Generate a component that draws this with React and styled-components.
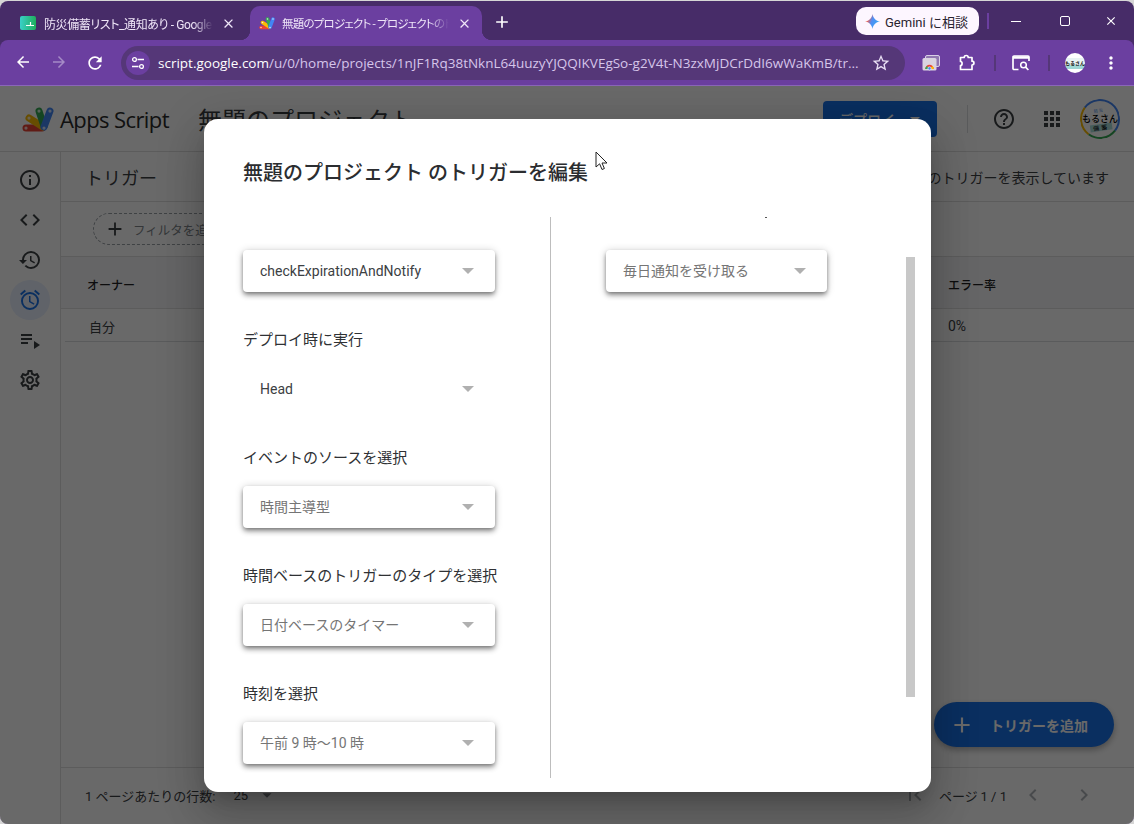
import React from 'react';
import styled, { createGlobalStyle } from 'styled-components';
import {
  MdInfoOutline, MdCode, MdHistory, MdOutlineAlarm, MdPlaylistPlay, MdOutlineSettings,
  MdArrowBack, MdArrowForward, MdRefresh, MdStarBorder, MdClose, MdAdd, MdMoreVert,
  MdHelpOutline, MdApps, MdArrowDropDown, MdFirstPage, MdChevronLeft, MdChevronRight,
} from 'react-icons/md';

const UI_FONT = `Roboto, "Noto Sans CJK JP", sans-serif`;

const GlobalStyle = createGlobalStyle`
  html, body {
    margin: 0;
    height: 100%;
    background: #d6d6d6;
    overflow: hidden;
  }
  #root {
    height: 100%;
  }
  * {
    box-sizing: border-box;
  }
`;

const Page = styled.div`
  height: 824px;
  padding-top: 1px;
  font-family: ${UI_FONT};
`;

const BrowserWindow = styled.div`
  height: 823px;
  display: flex;
  flex-direction: column;
  border-radius: 8px;
  overflow: hidden;
  background: #472c68;
  position: relative;
`;

/* browser chrome */
const TabStrip = styled.div`
  height: 39px;
  flex: none;
  display: flex;
  padding: 5px 0 0 8px;
`;

const Tab = styled.div`
  width: ${p => (p.$active ? '232px' : '242px')};
  height: 34px;
  display: flex;
  align-items: center;
  gap: 8px;
  padding: ${p => (p.$active ? '0 10px 0 9px' : '0 14px 0 12px')};
  border-radius: 10px 10px 0 0;
  color: #efe6f8;
  font-size: 12px;
  background: ${p => (p.$active ? '#6b3fa0' : 'transparent')};
  position: relative;

  svg {
    flex: none;
  }

  ${p => p.$active && `
    &::before, &::after {
      content: '';
      position: absolute;
      bottom: 0;
      width: 10px;
      height: 10px;
    }
    &::before {
      left: -10px;
      background: radial-gradient(circle at 0 0, transparent 10px, #6b3fa0 10.5px);
    }
    &::after {
      right: -10px;
      background: radial-gradient(circle at 100% 0, transparent 10px, #6b3fa0 10.5px);
    }
  `}
`;

const TabTitle = styled.span`
  flex: 1;
  min-width: 0;
  margin-left: ${p => (p.$active ? '-1px' : '0')};
  font-size: ${p => (p.$active ? '11.5px' : '12px')};
  letter-spacing: ${p => (p.$active ? '-0.8px' : '-0.4px')};
  white-space: nowrap;
  font-feature-settings: "palt";
  -webkit-mask-image: linear-gradient(to right, #000 88%, transparent 100%);
  mask-image: linear-gradient(to right, #000 88%, transparent 100%);
`;

const NewTab = styled.div`
  width: 24px;
  height: 24px;
  margin: 4px 0 0 8px;
  display: flex;
  align-items: center;
  justify-content: center;
  color: #fff;
`;

const StripRight = styled.div`
  margin-left: auto;
  display: flex;
  align-items: center;
  height: 28px;
  margin-top: 1px;
`;

const GeminiPill = styled.div`
  width: 123px;
  height: 28px;
  border-radius: 10px;
  background: #fdf6ff;
  color: #2a2430;
  font-size: 13px;
  display: flex;
  align-items: center;
  gap: 5px;
  padding-left: 9px;
`;

const StripDivider = styled.div`
  width: 2px;
  height: 16px;
  margin: 0 20px 0 8px;
  background: #6b3fa0;
`;

const WindowButton = styled.div`
  width: 14px;
  margin-right: ${p => p.$gap || 0}px;
  display: flex;
  justify-content: center;
  color: #fff;
`;

const MinimizeLine = styled.div`
  width: 10px;
  height: 1px;
  background: #fff;
`;

const MaximizeBox = styled.div`
  width: 10px;
  height: 10px;
  border: 1px solid #fff;
  border-radius: 2px;
`;

const Toolbar = styled.div`
  height: 46px;
  flex: none;
  display: flex;
  align-items: center;
  background: #6b3fa0;
  border-bottom: 1px solid #8a66b8;
  border-radius: 8px 8px 0 0;
`;

const NavButton = styled.div`
  width: 36px;
  display: flex;
  justify-content: center;
  color: ${p => (p.$disabled ? '#a58bc6' : '#fff')};
`;

const NavGroup = styled.div`
  display: flex;
  flex: none;
  padding-left: 5px;
`;

const AddressBar = styled.div`
  width: 784px;
  height: 34px;
  flex: none;
  margin-left: 8px;
  display: flex;
  align-items: center;
  padding: 0 14px 0 5px;
  border-radius: 17px;
  background: #553778;
  color: #fff;
`;

const SiteChip = styled.div`
  width: 24px;
  height: 24px;
  flex: none;
  border-radius: 50%;
  background: #6b3fa0;
  display: flex;
  align-items: center;
  justify-content: center;
`;

const UrlText = styled.div`
  flex: 1;
  margin-left: 8px;
  font-family: "Open Sans", "Noto Sans", sans-serif;
  font-size: 13.5px;
  white-space: nowrap;
  color: #d6c5ea;
`;

const UrlHost = styled.span`
  color: #fff;
`;

const ToolIcons = styled.div`
  flex: 1;
  display: flex;
  align-items: center;
  padding-left: 8px;
  color: #fff;
`;

const ToolSlot = styled.div`
  width: 36px;
  display: flex;
  justify-content: center;
`;

const ToolDivider = styled.div`
  width: 2px;
  height: 16px;
  margin: 0 7px 0 9px;
  background: #553778;
`;

const ToolAvatar = styled.div`
  width: 20px;
  height: 20px;
  border-radius: 50%;
  background: linear-gradient(#fff 0 25%, #e8f3f3 25% 60%, #9fd8d6 60% 80%, #fff 80%);
  color: #111;
  font-size: 5px;
  font-weight: 700;
  line-height: 20px;
  text-align: center;
  white-space: nowrap;
`;

/* Apps Script page under the scrim */
const AppArea = styled.div`
  flex: 1;
  min-height: 0;
  display: flex;
  flex-direction: column;
  background: #fff;
  position: relative;
  color: #202124;
`;

const AppHeader = styled.header`
  height: 66px;
  flex: none;
  display: flex;
  align-items: center;
  padding: 0 14px 0 22px;
  border-bottom: 1px solid #e0e0e0;
`;

const ProductName = styled.div`
  margin-left: 6px;
  font-family: "Open Sans", Roboto, sans-serif;
  font-size: 22px;
  letter-spacing: -0.6px;
  color: #2b2b2b;
`;

const ProjectName = styled.div`
  margin-left: 29px;
  font-size: 24px;
  color: #3c4043;
`;

const HeaderRight = styled.div`
  margin-left: auto;
  display: flex;
  align-items: center;
`;

const DeployButton = styled.div`
  width: 114px;
  height: 36px;
  border-radius: 4px;
  background: #1a73e8;
  color: #fff;
  font-size: 14px;
  font-weight: 500;
  display: flex;
  align-items: center;
  padding-left: 16px;
`;

const DeployArrow = styled.span`
  margin-left: 8px;
  display: flex;
`;

const HeaderDivider = styled.div`
  width: 1px;
  height: 28px;
  margin: 0 24px 0 30px;
  background: #dadce0;
`;

const HeaderIcon = styled.div`
  width: 24px;
  margin-right: 24px;
  display: flex;
  justify-content: center;
  color: #3c4043;
`;

const AccountAvatar = styled.div`
  width: 40px;
  height: 40px;
  margin-left: -8px;
  border-radius: 50%;
  border: 2px solid #4285f4;
  border-left-color: #fbbc04;
  border-bottom-color: #34a853;
  background: #fff;
  color: #000;
  display: flex;
  flex-direction: column;
  align-items: center;
  justify-content: center;
  white-space: nowrap;
  transform: rotate(-8deg);
`;

const AvatarTop = styled.span`
  font-size: 4px;
  line-height: 6px;
  color: #1a73e8;
  letter-spacing: 1px;
`;

const AvatarName = styled.span`
  font-size: 9px;
  line-height: 10px;
  font-weight: 500;
  transform: rotate(8deg);
`;

const AvatarBand = styled.span`
  font-size: 6px;
  line-height: 7px;
  letter-spacing: 2px;
  padding: 0 3px;
  background: #a8dedb;
`;

const AppBody = styled.div`
  flex: 1;
  min-height: 0;
  display: flex;
`;

const SideNav = styled.nav`
  width: 61px;
  flex: none;
  display: flex;
  flex-direction: column;
  align-items: center;
  padding-top: 8px;
  border-right: 1px solid #e0e0e0;
`;

const SideItem = styled.div`
  width: 40px;
  height: 40px;
  border-radius: 50%;
  display: flex;
  align-items: center;
  justify-content: center;
  color: ${p => (p.$active ? '#1a73e8' : '#3c4043')};
  background: ${p => (p.$active ? '#e8f0fe' : 'transparent')};
`;

const Main = styled.main`
  flex: 1;
  min-width: 0;
  display: flex;
  flex-direction: column;
  position: relative;
`;

const TitleRow = styled.div`
  height: 50px;
  flex: none;
  display: flex;
  align-items: center;
  justify-content: space-between;
  padding: 0 25px 0 24px;
  border-bottom: 1px solid #e0e0e0;
`;

const PageTitle = styled.div`
  font-size: 18px;
  color: #3c4043;
`;

const TitleNote = styled.div`
  font-size: 14px;
  color: #3c4043;
`;

const FilterRow = styled.div`
  height: 55px;
  flex: none;
  display: flex;
  align-items: center;
  padding-left: 32px;
  border-bottom: 1px solid #e0e0e0;
`;

const FilterChip = styled.div`
  width: 190px;
  height: 32px;
  border: 1px dashed #9aa0a6;
  border-radius: 16px;
  display: flex;
  align-items: center;
  gap: 7px;
  padding-left: 10px;
  color: #80868b;
  font-size: 12.5px;
`;

const FilterPlus = styled.span`
  display: flex;
  color: #3c4043;
`;

const TableArea = styled.div`
  flex: 1;
  min-height: 0;
`;

const HeadRow = styled.div`
  height: 52px;
  display: flex;
  align-items: center;
  justify-content: space-between;
  padding: 3px 0 0 26px;
  background: #f5f6f7;
  border-bottom: 1px solid #e0e0e0;
  font-size: 12px;
  font-weight: 500;
  color: #202124;
`;

const ColumnEnd = styled.div`
  width: 186px;
`;

const RateCell = styled(ColumnEnd)`
  font-size: 14px;
`;

const DataRow = styled.div`
  height: 33px;
  display: flex;
  align-items: center;
  justify-content: space-between;
  margin-left: 4px;
  padding: 2px 0 0 24px;
  border-bottom: 1px solid #dadce0;
  font-size: 13px;
  color: #3c4043;
`;

const Footer = styled.div`
  height: 57px;
  flex: none;
  display: flex;
  align-items: center;
  padding: 0 38px 2px 24px;
  border-top: 1px solid #e0e0e0;
  font-size: 13px;
  color: #3c4043;
`;

const RowsValue = styled.span`
  margin-left: 18px;
  margin-right: 8px;
`;

const Pager = styled.div`
  margin-left: auto;
  display: flex;
  align-items: center;
  color: #b0b4b8;
`;

const PagerLabel = styled.span`
  margin: 0 14px 0 12px;
  color: #3c4043;
  font-feature-settings: "palt";
`;

const PagerGap = styled.span`
  width: 27px;
`;

const Fab = styled.div`
  position: absolute;
  right: 20px;
  bottom: 77px;
  width: 180px;
  height: 45px;
  border-radius: 23px;
  background: #1a73e8;
  color: #fff;
  font-size: 14px;
  font-weight: 700;
  display: flex;
  align-items: center;
  gap: 15px;
  padding-left: 15px;
  box-shadow: 0 3px 6px rgba(0, 0, 0, 0.3);
`;

/* modal */
const Scrim = styled.div`
  position: absolute;
  inset: 0;
  padding: 33px 0 0 204px;
  background: rgba(0, 0, 0, 0.59);
`;

const Dialog = styled.div`
  width: 727px;
  height: 673px;
  padding: 40px 16px 14px 39px;
  display: flex;
  flex-direction: column;
  background: #fff;
  border-radius: 14px;
  box-shadow: 0 11px 15px -7px rgba(0, 0, 0, 0.2), 0 24px 38px 3px rgba(0, 0, 0, 0.14), 0 9px 46px 8px rgba(0, 0, 0, 0.12);
`;

const DialogTitle = styled.h2`
  margin: 0 0 30px;
  height: 28px;
  font-size: 20px;
  line-height: 29px;
  font-weight: 500;
  color: #2b2d30;
`;

const DialogBody = styled.div`
  flex: 1;
  min-height: 0;
  display: flex;
`;

const LeftColumn = styled.div`
  width: 308px;
  flex: none;
  padding-top: 33px;
  display: flex;
  flex-direction: column;
  gap: 37px;
  border-right: 1px solid #bdbdbd;
`;

const Field = styled.div`
  display: flex;
  flex-direction: column;
  gap: 19px;
`;

const FieldLabel = styled.div`
  height: 20px;
  font-size: 15px;
  line-height: 22px;
  color: #2f3134;
  white-space: nowrap;
`;

const SelectBox = styled.div`
  width: ${p => p.$width || 252}px;
  height: 42px;
  flex: none;
  display: flex;
  align-items: center;
  padding: 0 21px 0 17px;
  border-radius: 4px;
  background: #fff;
  font-size: 14px;
  color: ${p => (p.$muted ? '#757575' : '#3c4043')};
  box-shadow: ${p => (p.$flat ? 'none' : '0 2px 4px -1px rgba(0,0,0,.4), 0 4px 5px rgba(0,0,0,.2), 0 1px 9px rgba(0,0,0,.2)')};
`;

const SelectText = styled.span`
  flex: 1;
  margin-bottom: ${p => (p.$lift ? '2px' : '0')};
  white-space: nowrap;
`;

const SelectArrow = styled.span`
  width: 0;
  height: 0;
  border-left: 6px solid transparent;
  border-right: 6px solid transparent;
  border-top: 6px solid #b0b0b0;
`;

const RightColumn = styled.div`
  flex: 1;
  min-width: 0;
  display: flex;
  justify-content: space-between;
  padding-left: 55px;
`;

const RightFields = styled.div`
  display: flex;
  flex-direction: column;
  gap: 32px;
`;

const Speck = styled.div`
  width: 2px;
  height: 1px;
  margin-left: 159px;
  background: #555;
`;

const ScrollThumb = styled.div`
  width: 9px;
  height: 440px;
  margin-top: 40px;
  background: #c8c8c8;
`;

const Cursor = styled.svg`
  position: absolute;
  left: 595px;
  top: 65px;
`;

function AppsScriptLogo({ size = 32 }) {
  return (
    <svg width={size} height={size * 0.94} viewBox="0 0 32 30">
      <g fill="none" strokeLinecap="round" strokeWidth="7">
        <path d="M4 25 H20" stroke="#ea4335" />
        <path d="M7 15 L21 24" stroke="#fbbc04" />
        <path d="M17 8 L22 23" stroke="#34a853" />
        <path d="M28 8 L22 24" stroke="#4285f4" />
      </g>
      <g fill="#ffffff" fillOpacity=".75">
        <circle cx="4" cy="25" r="1.6" />
        <circle cx="7" cy="15" r="1.6" />
        <circle cx="17" cy="8" r="1.6" />
        <circle cx="28" cy="8" r="1.6" />
        <circle cx="22" cy="25" r="1.6" />
      </g>
    </svg>
  );
}

function SheetsFavicon() {
  return (
    <svg width="16" height="14" viewBox="0 0 16 14">
      <defs>
        <linearGradient id="sheetFill" x1="0" x2="1" y1="0" y2="0">
          <stop offset="0" stopColor="#3ad0c8" />
          <stop offset="1" stopColor="#1fae5c" />
        </linearGradient>
      </defs>
      <rect width="16" height="14" rx="2" fill="url(#sheetFill)" />
      <path d="M6 9.5 H14 M10.5 6 V9.5" stroke="#fff" strokeWidth="1.2" fill="none" />
    </svg>
  );
}

function GeminiSpark() {
  return (
    <svg width="15" height="15" viewBox="0 0 16 16">
      <defs>
        <linearGradient id="sparkFill" x1="0" x2="1" y1="0" y2="0.4">
          <stop offset="0" stopColor="#f0a13c" />
          <stop offset="0.3" stopColor="#e8615a" />
          <stop offset="0.55" stopColor="#4f8df5" />
          <stop offset="1" stopColor="#3aa6f0" />
        </linearGradient>
      </defs>
      <path d="M8 0 C8.6 4.4 11.6 7.4 16 8 C11.6 8.6 8.6 11.6 8 16 C7.4 11.6 4.4 8.6 0 8 C4.4 7.4 7.4 4.4 8 0 Z" fill="url(#sparkFill)" />
    </svg>
  );
}

function SiteSettingsIcon() {
  return (
    <svg width="14" height="14" viewBox="0 0 14 14" fill="none" stroke="#fff" strokeWidth="1.3">
      <circle cx="3.5" cy="3.5" r="1.9" />
      <path d="M6.5 3.5 H13" />
      <circle cx="10.5" cy="10.5" r="1.9" />
      <path d="M1 10.5 H7.5" />
    </svg>
  );
}

function SavedTabsIcon() {
  return (
    <svg width="18" height="16" viewBox="0 0 18 16">
      <rect x="3.5" y="0.5" width="14" height="11" rx="1.5" fill="#8f76b0" stroke="#d9cfe6" />
      <rect x="0.5" y="3" width="14" height="12.5" rx="1.5" fill="#d9d3e0" />
      <path d="M3.2 14 a4.3 4.3 0 0 1 8.6 0 Z" fill="#ea4335" />
      <path d="M7.5 14 L11.8 14 A4.3 4.3 0 0 0 10.6 11 Z" fill="#fbbc04" />
      <path d="M3.2 14 L7.5 14 L5 11 A4.3 4.3 0 0 0 3.2 14 Z" fill="#34a853" />
      <circle cx="7.5" cy="13.4" r="1.6" fill="#4285f4" stroke="#fff" strokeWidth=".6" />
    </svg>
  );
}

function ExtensionIcon() {
  return (
    <svg width="18" height="18" viewBox="0 0 18 18" fill="none" stroke="#fff" strokeWidth="1.7" strokeLinejoin="round">
      <path d="M2.5 3.5 H6.2 C6.2 0.8 10.2 0.8 10.2 3.5 H14 V7.2 C16.6 7.2 16.6 11 14 11 V15.5 H2.5 V11.5 C4.6 11.5 4.6 7.5 2.5 7.5 Z" />
    </svg>
  );
}

function TabSearchIcon() {
  return (
    <svg width="18" height="16" viewBox="0 0 18 16" fill="none" stroke="#fff">
      <path d="M6.5 14.5 H2 A1 1 0 0 1 1 13.5 V2 A1 1 0 0 1 2 1 H16 A1 1 0 0 1 17 2 V6" strokeWidth="1.7" />
      <path d="M1 2.5 H17" strokeWidth="2.6" />
      <circle cx="11.5" cy="10" r="2.8" strokeWidth="1.5" />
      <path d="M13.6 12.2 L16.4 15" strokeWidth="1.7" />
    </svg>
  );
}

function PointerCursor() {
  return (
    <Cursor width="13" height="20" viewBox="0 0 13 20">
      <path d="M1 1 V16 L4.6 12.8 L7 18.5 L9.4 17.5 L7 12 H12 Z" fill="#fff" stroke="#222" strokeWidth="1" strokeLinejoin="round" />
    </Cursor>
  );
}

function Select({ children, ...rest }) {
  return (
    <SelectBox {...rest}>
      <SelectText $lift={rest.$muted}>{children}</SelectText>
      <SelectArrow />
    </SelectBox>
  );
}

const sideIcons = [MdInfoOutline, MdCode, MdHistory, MdOutlineAlarm, MdPlaylistPlay, MdOutlineSettings];

const triggerFields = [
  { label: 'デプロイ時に実行', value: 'Head', flat: true },
  { label: 'イベントのソースを選択', value: '時間主導型', muted: true },
  { label: '時間ベースのトリガーのタイプを選択', value: '日付ベースのタイマー', muted: true },
  { label: '時刻を選択', value: '午前 9 時～10 時', muted: true },
];

export default function App() {
  return (
    <Page>
      <GlobalStyle />
      <BrowserWindow>
        <TabStrip>
          <Tab>
            <SheetsFavicon />
            <TabTitle>防災備蓄リスト_通知あり - Google</TabTitle>
            <MdClose size={15} />
          </Tab>
          <Tab $active>
            <AppsScriptLogo size={16} />
            <TabTitle $active>無題のプロジェクト - プロジェクトのト</TabTitle>
            <MdClose size={15} />
          </Tab>
          <NewTab><MdAdd size={20} /></NewTab>
          <StripRight>
            <GeminiPill>
              <GeminiSpark />
              Gemini に相談
            </GeminiPill>
            <StripDivider />
            <WindowButton $gap={35}><MinimizeLine /></WindowButton>
            <WindowButton $gap={32}><MaximizeBox /></WindowButton>
            <WindowButton $gap={16}><MdClose size={18} /></WindowButton>
          </StripRight>
        </TabStrip>

        <Toolbar>
          <NavGroup>
            <NavButton><MdArrowBack size={18} /></NavButton>
            <NavButton $disabled><MdArrowForward size={18} /></NavButton>
            <NavButton><MdRefresh size={20} /></NavButton>
          </NavGroup>
          <AddressBar>
            <SiteChip><SiteSettingsIcon /></SiteChip>
            <UrlText>
              <UrlHost>script.google.com</UrlHost>/u/0/home/projects/1nJF1Rq38tNknL64uuzyYJQQIKVEgSo-g2V4t-N3zxMjDCrDdI6wWaKmB/tr...
            </UrlText>
            <MdStarBorder size={20} color="#e8def3" />
          </AddressBar>
          <ToolIcons>
            <ToolSlot><SavedTabsIcon /></ToolSlot>
            <ToolSlot><ExtensionIcon /></ToolSlot>
            <ToolDivider />
            <ToolSlot><TabSearchIcon /></ToolSlot>
            <ToolDivider />
            <ToolSlot><ToolAvatar>もるさん</ToolAvatar></ToolSlot>
            <ToolSlot><MdMoreVert size={20} /></ToolSlot>
          </ToolIcons>
        </Toolbar>

        <AppArea>
          <AppHeader>
            <AppsScriptLogo />
            <ProductName>Apps Script</ProductName>
            <ProjectName>無題のプロジェクト</ProjectName>
            <HeaderRight>
              <DeployButton>
                デプロイ
                <DeployArrow><MdArrowDropDown size={24} /></DeployArrow>
              </DeployButton>
              <HeaderDivider />
              <HeaderIcon><MdHelpOutline size={24} /></HeaderIcon>
              <HeaderIcon><MdApps size={24} /></HeaderIcon>
              <AccountAvatar>
                <AvatarTop>防災</AvatarTop>
                <AvatarName>もるさん</AvatarName>
                <AvatarBand>備蓄</AvatarBand>
              </AccountAvatar>
            </HeaderRight>
          </AppHeader>

          <AppBody>
            <SideNav>
              {sideIcons.map((Icon, i) => (
                <SideItem key={i} $active={i === 3}><Icon size={24} /></SideItem>
              ))}
            </SideNav>
            <Main>
              <TitleRow>
                <PageTitle>トリガー</PageTitle>
                <TitleNote>このプロジェクトのトリガーを表示しています</TitleNote>
              </TitleRow>
              <FilterRow>
                <FilterChip>
                  <FilterPlus><MdAdd size={22} /></FilterPlus>
                  フィルタを追加
                </FilterChip>
              </FilterRow>
              <TableArea>
                <HeadRow>
                  <span>オーナー</span>
                  <ColumnEnd>エラー率</ColumnEnd>
                </HeadRow>
                <DataRow>
                  <span>自分</span>
                  <RateCell>0%</RateCell>
                </DataRow>
              </TableArea>
              <Footer>
                1 ページあたりの行数:
                <RowsValue>25</RowsValue>
                <MdArrowDropDown size={22} color="#80868b" />
                <Pager>
                  <MdFirstPage size={24} />
                  <PagerLabel>ページ 1 / 1</PagerLabel>
                  <MdChevronLeft size={24} />
                  <PagerGap />
                  <MdChevronRight size={24} />
                </Pager>
              </Footer>
              <Fab>
                <MdAdd size={26} />
                トリガーを追加
              </Fab>
            </Main>
          </AppBody>

          <Scrim>
            <Dialog>
              <DialogTitle>無題のプロジェクト のトリガーを編集</DialogTitle>
              <DialogBody>
                <LeftColumn>
                  <Select>checkExpirationAndNotify</Select>
                  {triggerFields.map(f => (
                    <Field key={f.label}>
                      <FieldLabel>{f.label}</FieldLabel>
                      <Select $flat={f.flat} $muted={f.muted}>{f.value}</Select>
                    </Field>
                  ))}
                </LeftColumn>
                <RightColumn>
                  <RightFields>
                    <Speck />
                    <Select $width={221} $muted>毎日通知を受け取る</Select>
                  </RightFields>
                  <ScrollThumb />
                </RightColumn>
              </DialogBody>
            </Dialog>
            <PointerCursor />
          </Scrim>
        </AppArea>
      </BrowserWindow>
    </Page>
  );
}
